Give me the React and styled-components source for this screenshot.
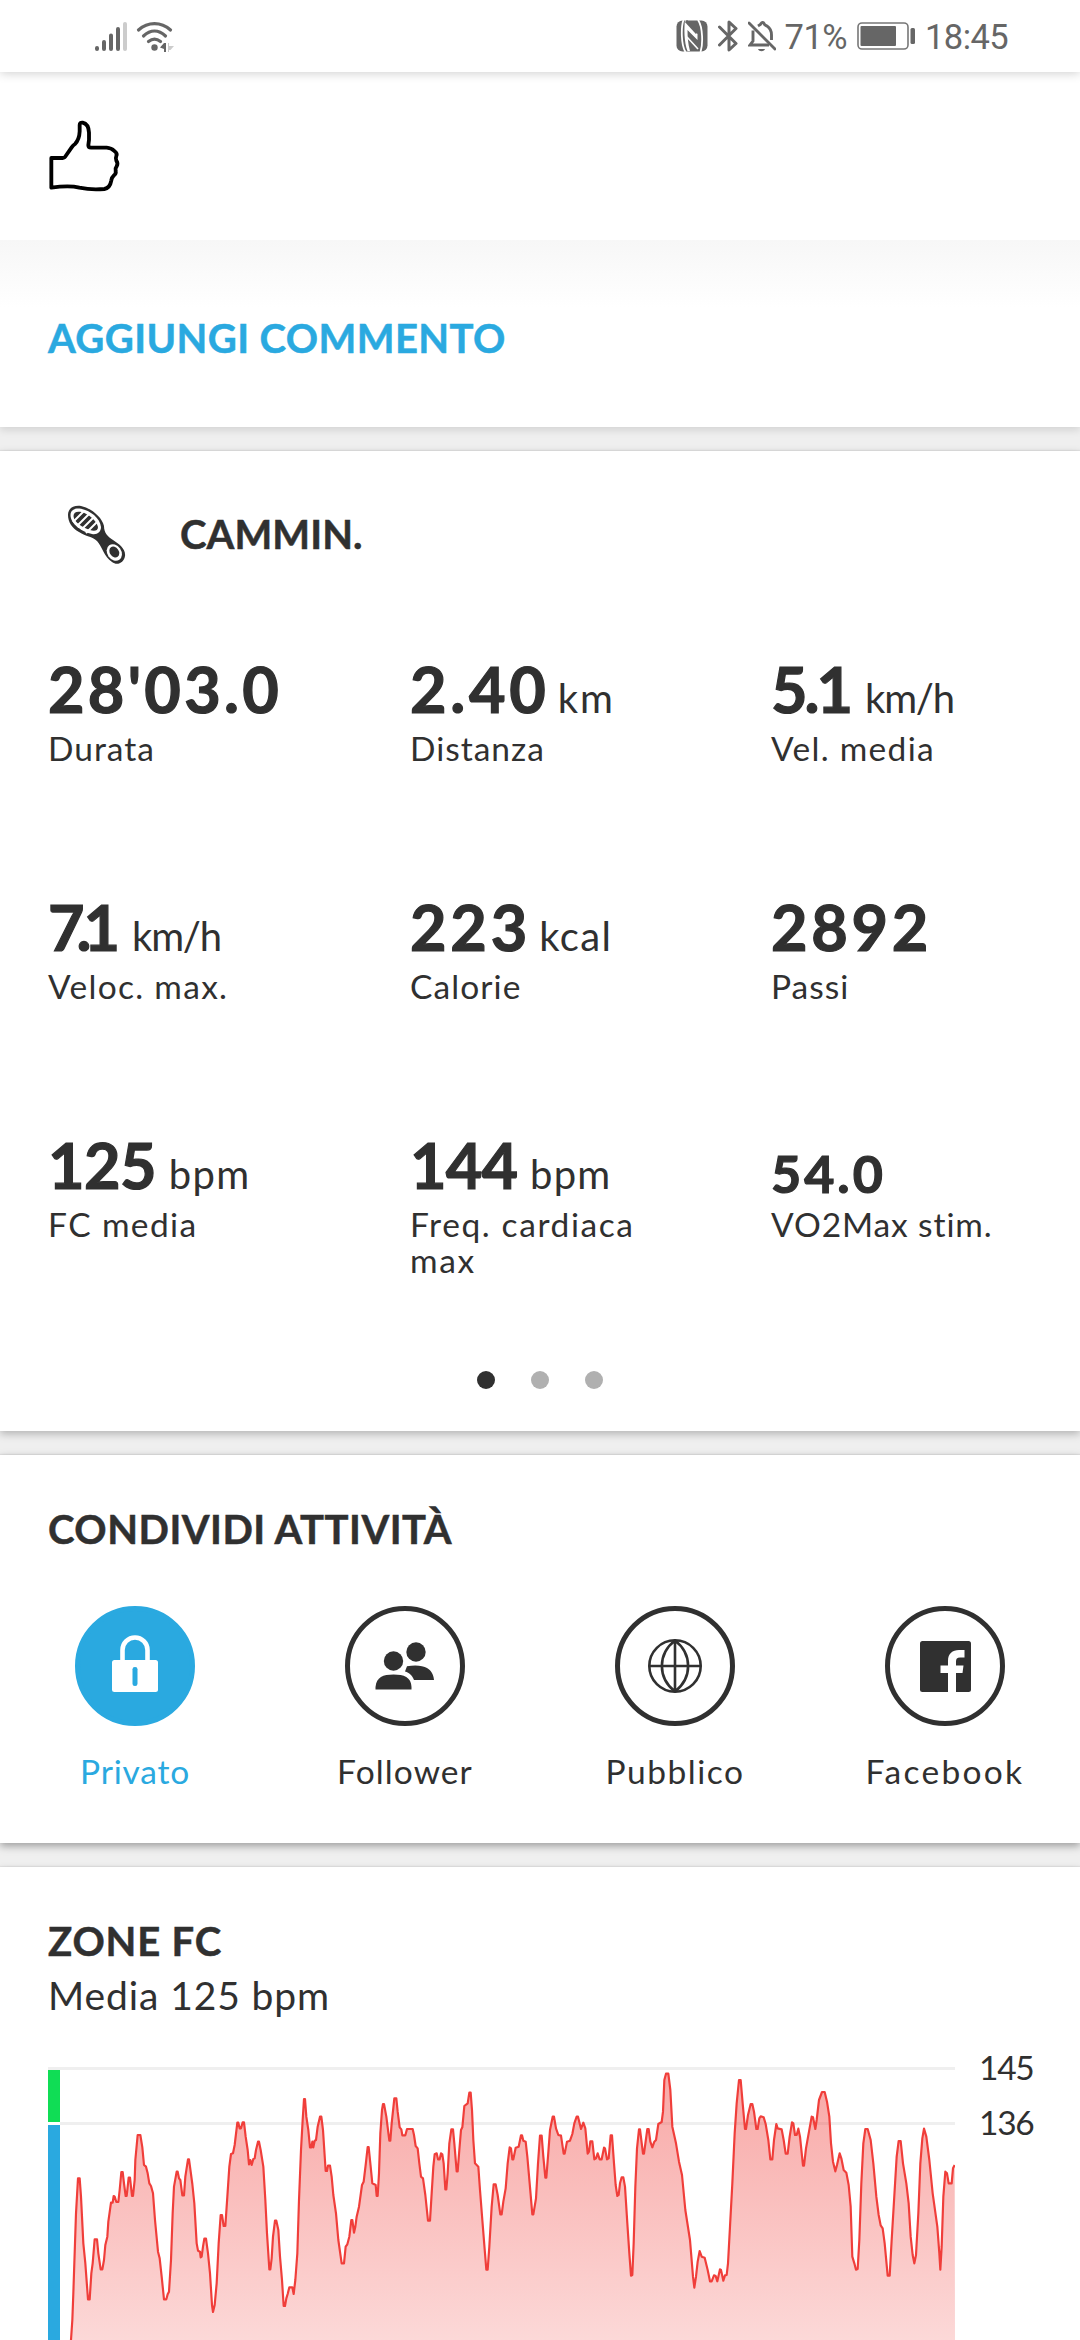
import React from 'react'
import styled, { createGlobalStyle } from 'styled-components'


const GlobalStyle = createGlobalStyle`
    html, body {
        margin: 0;
        padding: 0;
        background: #efefef;
    }
`

const Screen = styled.main`
    box-sizing: border-box;
    width: 1080px;
    height: 2340px;
    overflow: hidden;
    display: flex;
    flex-direction: column;
    background: #efefef;
    color: #303030;
    font-family: Lato, "Liberation Sans", sans-serif;
    font-kerning: normal;
`

const StatusBar = styled.header`
    box-sizing: border-box;
    flex: none;
    height: 72px;
    padding: 0 72px 0 94px;
    display: flex;
    align-items: center;
    background: #fff;
    color: #666;
    z-index: 1;
    box-shadow: 0 1px 10px rgba(0, 0, 0, 0.2);

    svg { display: block; flex: none; }
`

const StatusGroup = styled.div`
    display: flex;
    align-items: center;
    gap: ${props => props.$gap || 0}px;
    margin-left: ${props => props.$end ? 'auto' : '0'};
`

const StatusText = styled.span`
    font-family: Roboto, sans-serif;
    font-size: 34.5px;
    line-height: 40px;
    padding-top: 2px;
    letter-spacing: ${props => props.$spacing || 0}px;
    margin-left: ${props => props.$left || 0}px;
`

const Card = styled.section`
    box-sizing: border-box;
    flex: none;
    height: ${props => props.$height}px;
    padding: ${props => props.$top || 0}px 0 0;
    margin-bottom: 24px;
    background: #fff;
    box-shadow: 0 -1px 1px rgba(0, 0, 0, 0.05), 0 3px 8px rgba(0, 0, 0, ${props => props.$shade || 0.2});
`

const LikeBar = styled.div`
    box-sizing: border-box;
    height: 168px;
    padding: 40px 40px 0;
    svg { display: block; }
`

const CommentBar = styled.div`
    box-sizing: border-box;
    height: 187px;
    padding-top: 73px;
    background: linear-gradient(#f7f7f7, #fff 68px);
`

const Title = styled.h2`
    box-sizing: border-box;
    height: 48px;
    margin: 0 0 0 48px;
    padding-top: 1px;
    font-size: 40px;
    line-height: 48px;
    font-weight: 700;
    color: ${props => props.$color || 'inherit'};
    letter-spacing: ${props => props.$spacing || 0}px;
    -webkit-text-stroke: 0.5px currentColor;
    white-space: nowrap;
`

const ActivityTitle = styled(Title)`
    margin: 4px 0 0;
`

const Subtitle = styled.p`
    margin: 7px 0 0 48px;
    font-size: 39px;
    line-height: 48px;
    letter-spacing: 0.9px;
`

const ActivityHeader = styled.div`
    display: flex;
    height: 60px;
    padding-left: 66px;
    gap: 54px;
    svg { display: block; }
`

const StatsGrid = styled.div`
    display: grid;
    grid-template-columns: 362px 361px 1fr;
    grid-auto-rows: 238px;
    margin: 87px 0 0 48px;
`

const StatValue = styled.div`
    box-sizing: border-box;
    height: 74px;
    display: flex;
    align-items: baseline;
    white-space: nowrap;
    padding-top: ${props => props.$small ? 15 : 0}px;
    font-size: ${props => props.$small ? 52 : 63}px;
    line-height: ${props => props.$small ? 60 : 74}px;
    letter-spacing: ${props => props.$spacing || 0}px;
    font-weight: 700;
    -webkit-text-stroke: 1.2px currentColor;
`

const StatUnit = styled.span`
    margin-left: ${props => props.$left}px;
    font-size: 40px;
    line-height: 48px;
    font-weight: 400;
    letter-spacing: ${props => props.$spacing || 0}px;
    -webkit-text-stroke: 0;
`

const StatLabel = styled.div`
    max-width: 260px;
    margin-top: 4px;
    font-size: 33.5px;
    line-height: 36px;
    letter-spacing: ${props => props.$spacing ?? 1}px;
`

const Pager = styled.div`
    display: flex;
    justify-content: center;
    gap: 36px;
    margin-top: 5px;
`

const PagerDot = styled.span`
    width: 18px;
    height: 18px;
    border-radius: 50%;
    background: ${props => props.$active ? '#303030' : '#b0b0b0'};
`

const ShareRow = styled.div`
    display: grid;
    grid-template-columns: repeat(4, 1fr);
    margin-top: 54px;
`

const ShareOption = styled.div`
    display: flex;
    flex-direction: column;
    align-items: center;
    gap: 25px;
    font-size: 33.5px;
    line-height: 40px;
    letter-spacing: ${props => props.$spacing || 0}px;
    color: ${props => props.$active ? '#2aa9e0' : 'inherit'};
`

const ShareCircle = styled.div`
    box-sizing: border-box;
    width: 120px;
    height: 120px;
    display: flex;
    align-items: center;
    justify-content: center;
    padding-bottom: ${props => props.$active ? 5 : 0}px;
    border: 5px solid ${props => props.$active ? '#2aa9e0' : '#303030'};
    border-radius: 50%;
    background: ${props => props.$active ? '#2aa9e0' : '#fff'};
    svg { display: block; }
`

const ChartRow = styled.div`
    display: flex;
    margin: 48px 0 0 48px;
    svg { display: block; flex: none; }
`

const ChartScale = styled.div`
    margin: -18px 0 0 24px;
    display: flex;
    flex-direction: column;
    gap: 19px;
    font-size: 33.5px;
    line-height: 36px;
    letter-spacing: -1.3px;
`


const SignalIcon = () => (
    <svg width="34" height="32" viewBox="0 0 34 32" stroke="#666" strokeWidth="4" strokeLinecap="round">
        <path d="M3 29v-1M10 29v-7M17 29v-13.500M24 29V9" />
        <path d="M31 29V4" stroke="#ccc" />
    </svg>
)

const WifiIcon = () => (
    <svg width="38" height="32" viewBox="0 0 38 32" fill="none" stroke="#666" strokeWidth="3.200" strokeLinecap="round">
        <path d="M2.500 10C12 1.500 25 1.500 34.500 10M7.500 16C14.500 9.500 22.500 9.500 29.500 16M12.500 21.500C16.500 18.300 20.500 18.300 24.500 21.500" />
        <circle cx="18.500" cy="27.500" r="3.200" fill="#666" stroke="none" />
        <path d="M24 27.500l4-4.500h2v9h-2v-3z" fill="#666" stroke="none" />
        <path d="M32 23h1v3h5l-3.500 4H33v2h-1z" fill="#ccc" stroke="none" />
    </svg>
)

const NfcIcon = () => (
    <svg width="32" height="32" viewBox="0 0 32 32">
        <rect x="0.500" y="0.500" width="31" height="31" rx="6" fill="#666" />
        <path d="M7.500 0C5 7 5 25 9.500 32M22 0C27 7 27 25 24.500 32" fill="none" stroke="#fff" strokeWidth="1.800" />
        <path d="M9 0L21.500 14V20L11.500 10C11.500 17 12 24 14 31H11.500C8 22 8 8 9 0Z" fill="#fff" />
        <path d="M11 17L22 29" fill="none" stroke="#fff" strokeWidth="1.600" />
        <path d="M10 1L21 13" stroke="#666" strokeWidth="3" />
    </svg>
)

const BluetoothIcon = () => (
    <svg width="20" height="32" viewBox="0 0 20 32" fill="none" stroke="#666" strokeWidth="3" strokeLinejoin="round" strokeLinecap="round">
        <path d="M1.500 7L18 23.500l-7 6.500V2l7 6.500L1.500 25" />
    </svg>
)

const BellOffIcon = () => (
    <svg width="28" height="32" viewBox="0 0 28 32" fill="none" stroke="#666" strokeWidth="2.900">
        <path d="M5 10.500V21l-3 4h19M10 6c1.500-1 2.500-1 3-2.500 1-1.500 2.500-1 3 0 .5 1.500 1 1.500 3 2.500 3 2 4.500 5 4.500 9v5" />
        <path d="M1 3l26 26" strokeLinecap="round" />
        <path d="M10 29h7c-1 3-6 3-7 0z" fill="#666" stroke="none" />
    </svg>
)

const BatteryIcon = () => (
    <svg width="58" height="28" viewBox="0 0 58 28">
        <rect x="1" y="1" width="50" height="26" rx="4" fill="none" stroke="#777" strokeWidth="1.600" />
        <rect x="3.500" y="4" width="35.500" height="20" rx="1" fill="#666" />
        <rect x="53.500" y="6" width="4.500" height="16" rx="1.500" fill="#666" />
    </svg>
)

const ThumbIcon = () => (
    <svg width="90" height="90" viewBox="0 0 270 270" fill="none" stroke="#000" strokeWidth="11.500" strokeLinejoin="round">
        <path d="M34 138H68Q74 138 77 132L95 106Q99 100 105 96Q118 82 119 58V39Q119 31 128 32Q146 36 147 62V84Q146 91 145 100Q145 107 153 107H200Q214 108 223 117Q233 124 229 132Q226 139 229 146Q235 154 230 163Q225 169 227 178Q229 186 221 191Q215 196 214 205Q210 228 193 231Q155 235 118 227Q88 219 34 227Z" />
    </svg>
)

const ShoeIcon = () => (
    <svg width="60" height="60" viewBox="0 0 60 60">
        <path fill="#303030" d="M2 10C2 3 8 0 15 1C25 3 36 12 38 21C38 28 42 32 47 35C53 39 60 44 59 51C58 58 51 61 46 57C38 52 36 41 31 36C26 31 20 32 13 27C6 23 2 17 2 10Z" />
        <path fill="#fff" d="M4.500 10C4.500 5 9 2.800 15 3.800C24 5.500 34 13 35 22C35 27 31 30 26 29C16 27 4.500 19 4.500 10Z" />
        <path fill="#303030" d="M7.500 11C7.500 7 11 6 15.500 7C22 8.500 31 16 32 22C32 26 28 26.500 24 25C17 23 7.500 17 7.500 11Z" />
        <path stroke="#fff" strokeWidth="2" d="M7 17L18 6M11 21L22.500 9.500M15.500 24.500L27.500 12.500M20 28L31 17" />
        <ellipse cx="48.300" cy="47.500" rx="7" ry="8.800" transform="rotate(-35 48.300 47.500)" fill="#fff" />
        <ellipse cx="48.300" cy="47" rx="4.500" ry="5.800" transform="rotate(-35 48.300 47)" fill="#303030" />
    </svg>
)

const LockIcon = () => (
    <svg width="46" height="57" viewBox="0 0 46 57">
        <path d="M10.500 27V15a12.500 12.500 0 0 1 25 0V27" fill="none" stroke="#fff" strokeWidth="4.600" />
        <rect x="0" y="25" width="46" height="32" rx="2.500" fill="#fff" />
        <rect x="20.500" y="32" width="5" height="19" rx="2.300" fill="#2aa9e0" />
    </svg>
)

const FollowersIcon = () => (
    <svg width="60" height="48" viewBox="0 0 60 48" fill="#303030">
        <circle cx="41" cy="10" r="9.700" />
        <path d="M32 24.300C40 22.500 48 23.500 52 26C56 28.500 58.500 32 59 38H39C37 33 34.500 31 30 29.500Z" />
        <circle cx="18.500" cy="19" r="9.700" />
        <path d="M0.500 47.500V45C1.500 35 8 32.500 18.500 32.500S36 35 36.500 45V47.500Z" />
    </svg>
)

const GlobeIcon = () => (
    <svg width="54" height="54" viewBox="0 0 54 54" fill="none" stroke="#303030" strokeWidth="2.600">
        <circle cx="27" cy="27" r="25.700" />
        <path d="M27 1V53M1 27H53M27 1.500C9.500 15 9.500 39 27 52.500C44.500 39 44.500 15 27 1.500Z" />
    </svg>
)

const FacebookIcon = () => (
    <svg width="51" height="51" viewBox="0 0 51 51">
        <rect width="51" height="51" rx="2.500" fill="#303030" />
        <path d="M28 51V32H20.500V24.500H28V20C28 12.500 32.500 9 39 9H44.500V16.500H40C37 16.500 36 18 36 20.500V24.500H43.500L42.500 32H36V51Z" fill="#fff" />
    </svg>
)


const stats = [
    { value: "28'03.0", label: 'Durata', spacing: 3.3 },
    { value: '2.40', unit: 'km', label: 'Distanza', spacing: 3.7, unitSpacing: 2 },
    { value: '5.1', unit: 'km/h', label: 'Vel. media', spacing: -3, unitSpacing: -1.2, labelSpacing: 1.3 },
    { value: '7.1', unit: 'km/h', label: 'Veloc. max.', spacing: -8, unitSpacing: -1.2, labelSpacing: 1.3 },
    { value: '223', unit: 'kcal', label: 'Calorie', spacing: 3.8, unitSpacing: 1.4, labelSpacing: 1.1 },
    { value: '2892', label: 'Passi', spacing: 3.7 },
    { value: '125', unit: 'bpm', label: 'FC media', spacing: -0.5, unitSpacing: 1.4, labelSpacing: 1.4 },
    { value: '144', unit: 'bpm', label: 'Freq. cardiaca max', spacing: -0.8, unitSpacing: 1.2, labelSpacing: 1.6 },
    { value: '54.0', label: 'VO2Max stim.', small: true, spacing: 3, labelSpacing: 0.9 },
]

const shareOptions = [
    { label: 'Privato', icon: <LockIcon />, active: true, spacing: 0.8 },
    { label: 'Follower', icon: <FollowersIcon />, spacing: 1.1 },
    { label: 'Pubblico', icon: <GlobeIcon />, spacing: 1.5 },
    { label: 'Facebook', icon: <FacebookIcon />, spacing: 2.3 },
]

// heart rate trace, three units per pixel
const heartRate = `213,1320 217,1260 220,1180 228,940 234,835 239,835 243,890 250,1030 256,1090 264,1198 269,1198 274,1120 278,1090
284,1018 291,1018 295,1060 302,1108 307,1108 312,1080 316,1035 322,1010 325,965 333,908 338,908 341,888 344,890 349,906 355,906
359,870 364,816 368,816 372,850 377,888 380,888 386,833 390,833 396,888 399,888 404,840 406,780 413,705 421,705 427,742 432,795
438,800 443,820 448,850 453,858 459,880 465,960 474,1055 479,1075 485,1130 492,1198 499,1198 503,1183 507,1175 513,1080 518,940
522,860 530,815 533,815 537,835 541,840 547,886 552,886 556,830 564,778 567,778 570,800 577,852 583,910 590,1030 594,1052
600,1055 602,1072 605,1070 609,1040 613,1016 618,1016 624,1060 630,1120 636,1215 639,1236 644,1215 650,1150 656,1030 662,945
666,945 671,978 676,978 682,890 688,800 693,762 699,760 704,735 712,668 715,668 719,685 723,685 728,667 732,667 737,710 743,750
747,793 751,780 755,795 760,777 764,775 768,750 774,725 777,725 782,750 790,800 796,900 801,1000 808,1108 811,1108 815,1075
819,1010 825,962 829,962 835,990 840,1070 846,1140 851,1218 855,1218 859,1195 863,1182 868,1162 877,1162 881,1182 886,1140
892,1060 897,900 903,750 908,660 912,597 915,597 919,650 925,690 930,742 934,742 937,725 940,742 944,722 948,720 953,680
960,650 964,650 969,690 977,813 981,813 984,797 990,797 995,830 1000,885 1008,940 1015,1020 1025,1090 1032,1090 1037,1040
1042,1033 1048,1010 1054,960 1057,960 1062,998 1066,980 1070,950 1077,920 1086,855 1091,845 1097,795 1103,741 1106,741
1112,800 1117,850 1127,855 1130,888 1133,888 1137,820 1141,700 1146,630 1149,612 1152,612 1159,650 1168,722 1171,722 1175,670
1183,595 1189,595 1193,635 1199,682 1204,688 1207,706 1216,706 1221,687 1238,687 1242,705 1247,738 1253,745 1258,790 1263,830
1269,835 1276,885 1284,962 1290,962 1295,880 1300,800 1304,763 1310,760 1314,778 1319,778 1323,760 1327,763 1331,790 1336,868
1339,868 1343,820 1348,730 1354,688 1359,688 1363,730 1370,814 1373,814 1378,750 1383,690 1387,682 1393,618 1403,610 1408,578
1412,578 1416,630 1420,720 1425,790 1435,800 1440,870 1447,960 1455,1060 1459,1109 1463,1109 1468,1040 1475,920 1481,853
1487,853 1493,885 1501,943 1505,943 1510,905 1517,865 1523,790 1529,742 1533,745 1537,778 1540,778 1547,743 1556,740 1563,706
1566,706 1570,722 1577,725 1582,770 1589,850 1597,943 1600,943 1608,895 1614,790 1620,707 1625,707 1630,770 1636,833 1639,833
1644,770 1650,690 1658,650 1662,650 1668,685 1675,705 1683,707 1691,761 1694,761 1701,725 1710,722 1717,702 1723,670 1730,650
1734,650 1743,687 1750,668 1756,685 1763,761 1767,755 1771,724 1777,724 1783,778 1788,775 1793,760 1799,778 1805,778 1812,743
1815,745 1821,778 1826,775 1832,706 1836,706 1842,790 1847,855 1852,888 1856,885 1860,850 1865,832 1870,832 1875,860 1882,970
1888,1060 1893,1127 1897,1125 1901,1030 1906,860 1911,745 1917,688 1920,688 1929,761 1932,761 1942,687 1946,687 1951,725
1957,742 1963,725 1968,720 1975,672 1985,666 1989,635 1993,540 1998,521 2005,521 2011,570 2017,680 2028,730 2037,785 2046,825
2056,930 2070,1020 2079,1130 2083,1163 2088,1130 2093,1085 2099,1053 2105,1070 2114,1073 2123,1110 2130,1144 2135,1144
2142,1126 2147,1128 2152,1144 2160,1108 2163,1110 2170,1142 2175,1126 2180,1125 2184,1090 2190,980 2197,850 2204,700 2210,610
2217,540 2222,540 2228,610 2235,687 2238,687 2244,645 2252,612 2257,612 2262,635 2269,687 2273,687 2278,655 2282,649 2291,652
2297,672 2305,720 2311,778 2317,778 2322,720 2329,672 2333,685 2345,688 2351,720 2357,761 2363,761 2369,710 2376,667 2380,670
2385,705 2390,705 2395,686 2400,710 2409,797 2412,797 2418,745 2426,700 2435,650 2439,652 2446,687 2450,660 2457,600 2466,576
2474,576 2481,605 2488,650 2493,730 2499,785 2506,814 2511,795 2519,760 2524,775 2531,810 2539,818 2546,855 2552,920 2557,1070
2563,1090 2568,1109 2573,1107 2578,1020 2584,850 2590,730 2596,687 2603,687 2612,720 2620,790 2629,890 2636,945 2642,976
2648,985 2654,1030 2663,1127 2669,1127 2675,1020 2684,870 2690,770 2696,723 2702,723 2709,790 2719,850 2726,910 2732,1010
2738,1065 2743,1090 2748,1065 2755,940 2761,790 2767,715 2772,686 2779,710 2788,780 2798,880 2812,980 2818,1060 2821,1109
2825,1040 2830,890 2836,815 2841,820 2846,850 2855,850 2859,805 2864,795`

const HeartChart = () => (
    <svg width="907" height="273" viewBox="144 501 2721 819">
        <defs>
            <linearGradient id="heartFill" gradientUnits="userSpaceOnUse" x1="0" y1="520" x2="0" y2="1320">
                <stop offset="0" stopColor="#f03e3a" stopOpacity="0.45" />
                <stop offset="1" stopColor="#f03e3a" stopOpacity="0.2" />
            </linearGradient>
        </defs>
        <path d="M144 505.500H2865M180 670.500H2865" stroke="#efefef" strokeWidth="9" />
        <rect x="144" y="510" width="36" height="156" fill="#10dd55" />
        <rect x="144" y="675" width="36" height="645" fill="#2aa9e0" />
        <polygon points={`${heartRate} 2865,1320`} fill="url(#heartFill)" />
        <polyline points={heartRate} fill="none" stroke="#f03e3a" strokeWidth="6.500" strokeLinejoin="round" />
    </svg>
)


export class App extends React.Component {
    render() {
        return(
            <Screen>
                <GlobalStyle />
                <StatusBar>
                    <StatusGroup $gap={8}>
                        <SignalIcon />
                        <WifiIcon />
                    </StatusGroup>
                    <StatusGroup $end $gap={10}>
                        <NfcIcon />
                        <BluetoothIcon />
                        <BellOffIcon />
                        <StatusText $left={-1} $spacing={-0.5}>71%</StatusText>
                        <BatteryIcon />
                        <StatusText $spacing={-0.6}>18:45</StatusText>
                    </StatusGroup>
                </StatusBar>

                <Card $height={355} $shade={0.12}>
                    <LikeBar><ThumbIcon /></LikeBar>
                    <CommentBar>
                        <Title $color="#2aa9e0" $spacing={0.4}>AGGIUNGI COMMENTO</Title>
                    </CommentBar>
                </Card>

                <Card $height={980} $top={54} $shade={0.25}>
                    <ActivityHeader>
                        <ShoeIcon />
                        <ActivityTitle $spacing={0.1}>CAMMIN.</ActivityTitle>
                    </ActivityHeader>
                    <StatsGrid>
                        {stats.map((stat) => (
                            <div key={stat.label}>
                                <StatValue $small={stat.small} $spacing={stat.spacing}>
                                    {stat.value}
                                    {stat.unit && (
                                        <StatUnit $left={12 - (stat.spacing || 0)} $spacing={stat.unitSpacing}>{stat.unit}</StatUnit>
                                    )}
                                </StatValue>
                                <StatLabel $spacing={stat.labelSpacing}>{stat.label}</StatLabel>
                            </div>
                        ))}
                    </StatsGrid>
                    <Pager>
                        <PagerDot $active />
                        <PagerDot />
                        <PagerDot />
                    </Pager>
                </Card>

                <Card $height={388} $top={49} $shade={0.35}>
                    <Title $spacing={0.5}>CONDIVIDI ATTIVITÀ</Title>
                    <ShareRow>
                        {shareOptions.map((option) => (
                            <ShareOption key={option.label} $active={option.active} $spacing={option.spacing}>
                                <ShareCircle $active={option.active}>{option.icon}</ShareCircle>
                                {option.label}
                            </ShareOption>
                        ))}
                    </ShareRow>
                </Card>

                <Card $height={480} $top={49}>
                    <Title $spacing={0.8}>ZONE FC</Title>
                    <Subtitle>Media 125 bpm</Subtitle>
                    <ChartRow>
                        <HeartChart />
                        <ChartScale>
                            <span>145</span>
                            <span>136</span>
                        </ChartScale>
                    </ChartRow>
                </Card>
            </Screen>
        )
    }
}

export default App
